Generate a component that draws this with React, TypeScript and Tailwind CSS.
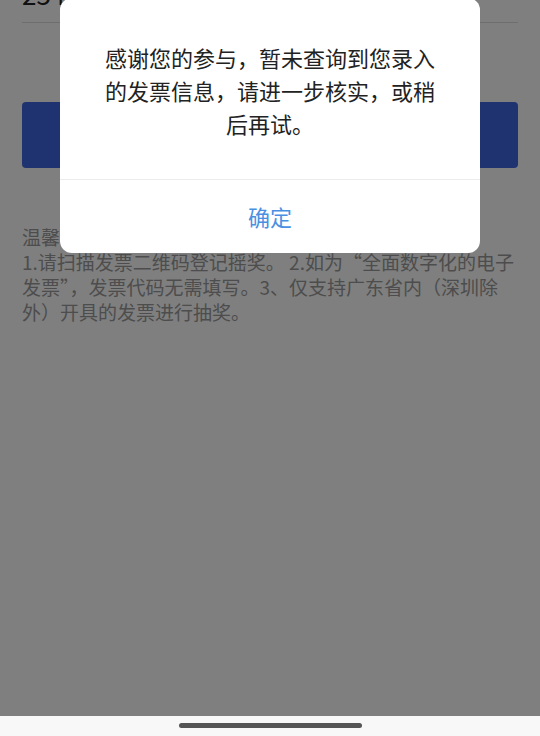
const FONT = "font-['Noto_Sans_CJK_SC','Noto_Sans',sans-serif]";

const TipText = () => (
  <div className="mx-[22px] mt-[56px] text-[19px] leading-[25px] text-[#9a9a9a]">
    <p>温馨提示：</p>
    <p>
      1.请扫描发票二维码登记摇奖。 2.如为“全面数字化的电子发票”，发票代码无需填写。3、仅支持广东省内（深圳除外）开具的发票进行抽奖。
    </p>
  </div>
);

const ResultDialog = () => (
  <div className="absolute left-[60px] top-[-2px] w-[420px] rounded-xl bg-white overflow-hidden">
    <p className="px-[40px] pt-[43px] pb-[39px] text-center text-[22px] leading-[33px] text-[#222]">
      感谢您的参与，暂未查询到您录入的发票信息，请进一步核实，或稍后再试。
    </p>
    <div className="border-t border-[#ececec]">
      <button className="w-full h-[73px] text-[22px] text-[#4a90e2]">确定</button>
    </div>
  </div>
);

export default function App() {
  return (
    <div className={`h-[736px] flex flex-col bg-white overflow-hidden ${FONT}`}>
      <div className="relative flex-1 flex flex-col overflow-hidden">
        {/* invoice form, scrolled so the code field is almost off the top */}
        <div className="mx-[22px] h-[23px] flex flex-col border-b border-[#dcdcdc]">
          <div className="-mt-[20px] text-[26px] leading-[28px] text-[#222]">254</div>
        </div>

        <button className="mx-[22px] mt-[79px] h-[66px] rounded-[4px] bg-[#3d66e1] text-white text-[20px]">
          查询
        </button>

        <TipText />

        {/* mask */}
        <div className="absolute inset-0 bg-black/50" />

        <ResultDialog />
      </div>

      {/* system nav bar */}
      <div className="h-[20px] bg-[#f8f8f8] flex justify-center pt-[7px]">
        <div className="w-[183px] h-[5px] rounded-full bg-[#555]" />
      </div>
    </div>
  );
}
